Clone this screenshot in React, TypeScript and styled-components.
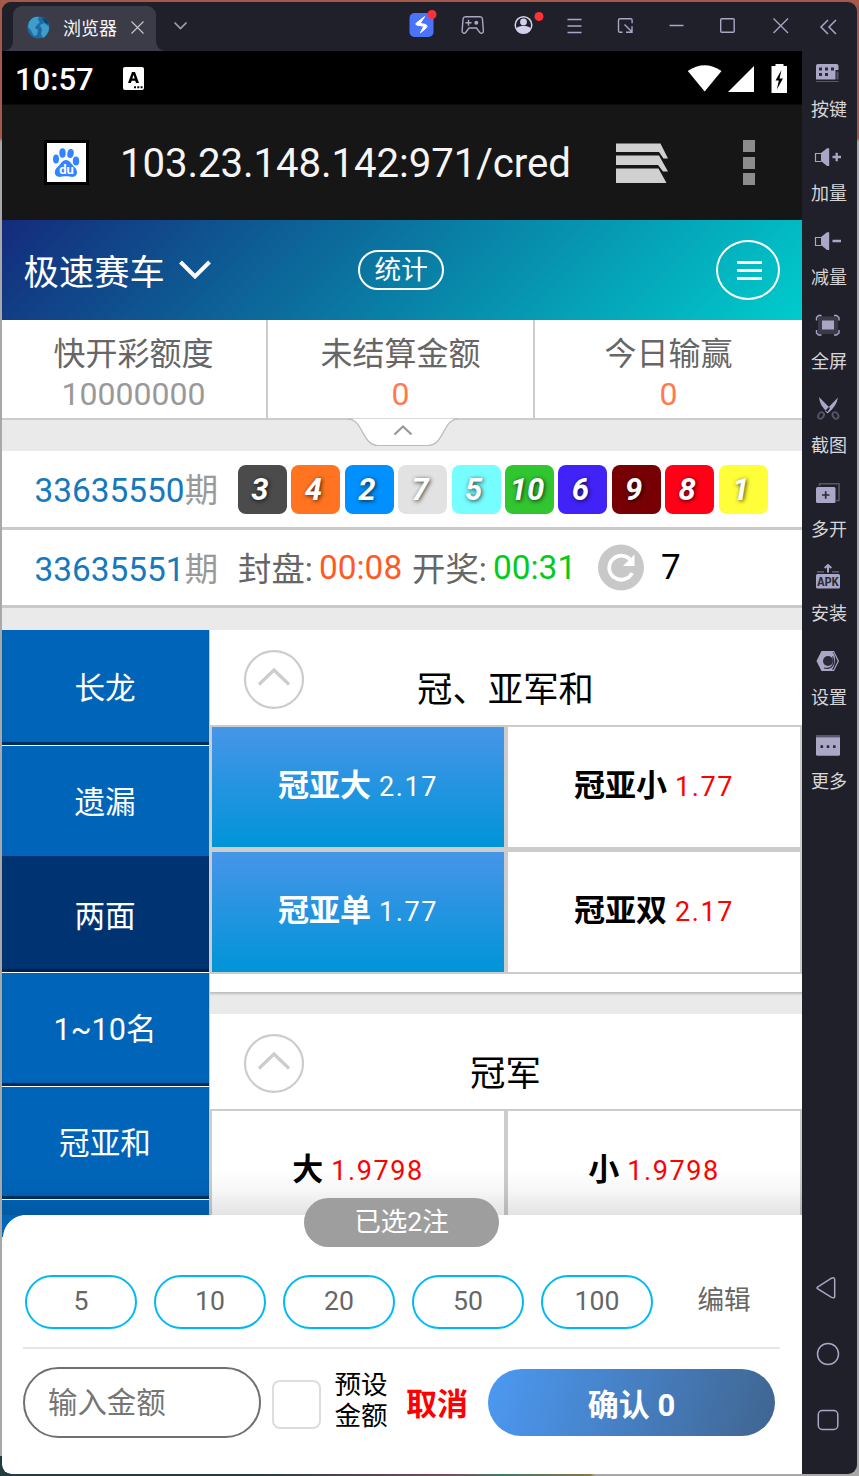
import React from 'react';
import styled, { createGlobalStyle, css } from 'styled-components';

const Global = createGlobalStyle`
  *, *::before, *::after { box-sizing: border-box; }
  body { margin: 0; }
  button, input { font: inherit; margin: 0; }
  svg { display: block; flex: none; }
`;

const lilac = '#a9a6c6';
const dim = '#56556a';

/* ---------- window frame ---------- */

const Desktop = styled.div`
  width: 859px;
  height: 1476px;
  padding: 2px;
  overflow: hidden;
  font-family: Roboto, 'Noto Sans CJK SC', sans-serif;
  background:
    linear-gradient(90deg, #233c42 0 250px, #7c4a5c 450px, #3d7b66 500px, #867843 590px, #a8a8a8 595px) 0 100% / 100% 20px no-repeat,
    linear-gradient(180deg, #a4594a 0 138px, #a8a8a8 142px);
`;

const Window = styled.div`
  display: flex;
  width: 855px;
  height: 1472px;
  border-radius: 9px;
  overflow: hidden;
  background: #20202b;
`;

const Phone = styled.div`
  width: 800px;
  flex: none;
  display: flex;
  flex-direction: column;
`;

const TitleBar = styled.div`
  height: 49px;
  flex: none;
  display: flex;
  background: #20202b;
`;

const AppTab = styled.div`
  position: relative;
  width: 143px;
  height: 45px;
  margin: 4px 1px 0 11px;
  padding: 0 12px 2px 14px;
  display: flex;
  align-items: center;
  background: #3c3c48;
  border-radius: 9px 9px 0 0;
  &::before, &::after {
    content: '';
    position: absolute;
    bottom: 0;
    width: 9px;
    height: 9px;
  }
  &::before { left: -9px; background: radial-gradient(circle at 0 0, transparent 8.5px, #3c3c48 9px); }
  &::after { right: -9px; background: radial-gradient(circle at 100% 0, transparent 8.5px, #3c3c48 9px); }
`;

const TabName = styled.span`
  flex: 1;
  margin-left: 13px;
  padding-bottom: 1px;
  font: 18px/26px 'Noto Sans CJK SC', sans-serif;
  color: #f4f4f6;
`;

const TabMenu = styled.div`
  margin-left: 10px;
  flex: 1;
`;

const WindowTools = styled.div`
  display: flex;
  width: 406.5px;
`;

/* ---------- right tool rail ---------- */

const Rail = styled.div`
  width: 55px;
  display: flex;
  flex-direction: column;
`;

const RailItem = styled.div`
  height: 84px;
  display: flex;
  flex-direction: column;
  align-items: center;
`;

const RailLabel = styled.span`
  font: 18px/30px 'Noto Sans CJK SC', sans-serif;
  color: #d6d6d8;
  margin-left: -1px;
`;

const RailNav = styled.div`
  margin-top: auto;
  padding-bottom: 21px;
`;

/* ---------- device bars ---------- */

const StatusBar = styled.div`
  height: 53px;
  flex: none;
  display: flex;
  align-items: center;
  padding: 2px 15px 0 13px;
  background: #000;
  color: #fff;
`;

const Clock = styled.span`
  width: 108px;
  padding-top: 2px;
  font-size: 31px;
  font-weight: 500;
  line-height: 36px;
`;

const Spacer = styled.span`
  flex: 1;
`;

const AddressBar = styled.div`
  height: 116px;
  flex: none;
  display: flex;
  align-items: center;
  padding: 0 47px 0 42px;
  background: #161616;
  border-top: 1px solid #0b0b0b;
`;

const SiteBadge = styled.span`
  width: 45px;
  height: 45px;
  border: 3px solid #000;
  background: #fff;
`;

const Address = styled.span`
  width: 450px;
  margin: 2px 46px 0 31px;
  white-space: nowrap;
  font-size: 40.2px;
  letter-spacing: -0.08px;
  line-height: 56px;
  color: #f5f5f5;
`;

const DotMenu = styled.span`
  display: grid;
  gap: 4.5px;
  margin-left: auto;
  i {
    width: 12px;
    height: 12px;
    background: #8c8c8c;
  }
`;

/* ---------- game header ---------- */

const GameHeader = styled.header`
  height: 100px;
  flex: none;
  display: flex;
  align-items: center;
  padding: 0 22px 0 21.6px;
  background: linear-gradient(135deg, #142b7c 0%, #00cccc 100%);
  color: #fff;
`;

const GameName = styled.span`
  font-size: 35.3px;
  line-height: 50px;
  margin: 6px 13.900px 0 0;
`;

const StatsPill = styled.button`
  width: 86px;
  height: 40px;
  margin-left: 147.500px;
  padding: 0;
  border: 2px solid #fff;
  border-radius: 20px;
  background: none;
  color: #fff;
  font-size: 26.6px;
  line-height: 36px;
`;

const RoundMenu = styled.button`
  width: 64px;
  height: 60px;
  margin-left: auto;
  padding: 0 0 0 3px;
  border: 2px solid #fff;
  border-radius: 50%;
  background: none;
  display: grid;
  place-content: center;
  gap: 5px;
  i {
    width: 25px;
    height: 3px;
    background: #fff;
  }
`;

const StatRow = styled.div`
  display: grid;
  grid-template-columns: 266px 267px 267px;
  height: 100px;
  flex: none;
  background: #fff;
  border-bottom: 2px solid #ccc;
`;

const Stat = styled.div<{ $last?: boolean }>`
  padding-top: 14px;
  border-right: ${(p) => (p.$last ? 'none' : '2px solid #ccc')};
  text-align: center;
  font-size: 32px;
  line-height: 40px;
  color: #666;
  &:first-child { padding-right: 1px; }
`;

const StatValue = styled.div<{ $tone: string }>`
  color: ${(p) => p.$tone};
`;

const Strip = styled.div<{ $h: number }>`
  height: ${(p) => p.$h}px;
  flex: none;
  background: #eaeaea;
`;

const FoldHandle = styled.div`
  width: 110px;
  margin: -2px 0 0 346px;
`;

/* ---------- draw rows ---------- */

const DrawRow = styled.div<{ $h: number; $b: number }>`
  height: ${(p) => p.$h}px;
  flex: none;
  display: flex;
  align-items: center;
  padding-left: 32.500px;
  background: #fff;
  border-bottom: ${(p) => p.$b}px solid #c9c9c9;
  font-size: 33.4px;
  line-height: 46px;
  color: #666;
`;

const Issue = styled.span`
  width: 203.500px;
  padding-top: 4px;
  color: #999;
  white-space: nowrap;
  b {
    font-weight: 400;
    color: #1678bd;
  }
`;

const Balls = styled.div`
  display: flex;
  gap: 4.4px;
`;

const Ball = styled.span<{ $bg: string }>`
  width: 49px;
  height: 49px;
  border-radius: 8px;
  background: ${(p) => p.$bg};
  color: #fff;
  font-size: 31px;
  font-weight: 700;
  font-style: italic;
  line-height: 50px;
  text-align: center;
  padding-right: 5px;
  text-shadow: 1px 1px 4px rgba(0, 0, 0, 0.75);
`;

const Countdown = styled.span<{ $tone: string; $w: number }>`
  width: ${(p) => p.$w}px;
  color: ${(p) => p.$tone};
`;

const CountLabel = styled.span<{ $w: number }>`
  width: ${(p) => p.$w}px;
  padding-top: 4px;
  white-space: nowrap;
`;

const RefreshCount = styled.span`
  margin-left: 17px;
  font-size: 35px;
  color: #000;
`;

/* ---------- bet area ---------- */

const Play = styled.div`
  display: flex;
  height: 585px;
  flex: none;
  overflow: hidden;
`;

const Menu = styled.nav`
  width: 207px;
  flex: none;
  display: flex;
  flex-direction: column;
  background: #0065b9;
`;

const MenuItem = styled.a<{ $h: number; $active?: boolean; $plain?: boolean; $lift: number }>`
  height: ${(p) => p.$h}px;
  flex: none;
  padding: 0 1px ${(p) => p.$lift}px 0;
  display: flex;
  align-items: center;
  justify-content: center;
  color: #fff;
  font-size: 30.6px;
  background: ${(p) => (p.$active ? '#003372' : '#0065b9')};
  ${(p) =>
    !p.$plain &&
    css`
      border-bottom: 1px solid #fff;
      box-shadow: inset 0 -3px 1px rgba(0, 25, 60, 0.75);
    `}
`;

const Board = styled.div`
  flex: 1;
  display: flex;
  flex-direction: column;
  background: #fff;
  border-left: 1px solid #bcd3e6;
`;

const GroupTitle = styled.div`
  height: 95px;
  flex: none;
  display: grid;
  grid-template-columns: 60px 1fr 95px;
  padding-left: 34px;
  font-size: 35.4px;
  line-height: 52px;
  color: #000;
  text-align: center;
  svg { margin-top: 20px; }
  span { margin-top: 34px; }
`;

const Cells = styled.div<{ $rows: number }>`
  height: ${(p) => p.$rows * 125 - 1}px;
  flex: none;
  display: grid;
  grid-template-columns: 292px 292px;
  grid-auto-rows: 120px;
  column-gap: 4px;
  row-gap: 5px;
  padding: 2px;
  background: #ccc;
`;

const Cell = styled.div<{ $on?: boolean }>`
  display: flex;
  align-items: center;
  justify-content: center;
  font-size: 27px;
  line-height: 40px;
  letter-spacing: 1.6px;
  padding-bottom: 1px;
  color: ${(p) => (p.$on ? '#fff' : '#f00')};
  background: ${(p) => (p.$on ? 'linear-gradient(180deg, #4795e8, #0094d8)' : '#fff')};
  strong {
    margin: -1px 8px 0 0;
    font-size: 31px;
    letter-spacing: 0;
    color: ${(p) => (p.$on ? '#fff' : '#000')};
  }
`;

const Gap = styled.div`
  height: 40px;
  flex: none;
  border-top: 18px solid #fff;
  background: linear-gradient(180deg, #b8b8b8, #e2e2e2 3px, #eaeaea 4px);
  background-clip: padding-box;
`;

/* ---------- bet slip ---------- */

const Slip = styled.div`
  position: relative;
  height: 259px;
  flex: none;
  padding: 60px 22px 0 21px;
  background: #fff;
  border-radius: 0 0 0 9px;
  &::before {
    content: '';
    position: absolute;
    left: 0;
    top: 0;
    width: 24px;
    height: 22px;
    background: radial-gradient(circle at 24px 23px, #fff 22.6px, #0065b9 23.4px);
  }
  &::after {
    content: '';
    position: absolute;
    inset: -46px 0 auto 0;
    height: 46px;
    background: linear-gradient(180deg, rgba(0, 0, 0, 0), rgba(0, 0, 0, 0.03) 45%, rgba(0, 0, 0, 0.11));
  }
`;

const CountBadge = styled.div`
  position: absolute;
  z-index: 1;
  left: 302px;
  top: -17px;
  width: 195px;
  height: 49px;
  border-radius: 25px;
  background: #9e9e9e;
  color: #fff;
  font-size: 26.6px;
  line-height: 48px;
  text-align: center;
`;

const ChipRow = styled.div`
  display: flex;
  align-items: flex-start;
  gap: 17px;
  height: 74px;
  padding-left: 2px;
  border-bottom: 2px solid #e6e6e6;
  color: #666;
  font-size: 26.6px;
`;

const Chip = styled.button`
  width: 112px;
  height: 54px;
  padding: 0 0 2px;
  border: 2px solid #00b9f2;
  border-radius: 27px;
  background: none;
  color: inherit;
  line-height: 48px;
`;

const EditLink = styled.span`
  margin-left: 27.500px;
  line-height: 50px;
`;

const PayRow = styled.div`
  display: flex;
  align-items: center;
  height: 107px;
`;

const Amount = styled.input`
  width: 238px;
  height: 71px;
  padding: 0 23px;
  border: 2px solid #707070;
  border-radius: 36px;
  background: #fff;
  font-size: 29.4px;
  outline: none;
  &::placeholder { color: #757575; opacity: 1; }
`;

const Check = styled.span`
  width: 49px;
  height: 49px;
  margin: 4px 13.500px 0 11px;
  border: 2px solid #ddd;
  border-radius: 8px;
`;

const Preset = styled.span`
  width: 54px;
  margin-top: -6px;
  font-size: 26.6px;
  line-height: 31px;
  color: #000;
`;

const Cancel = styled.span`
  margin: 5px 20px 0 17.500px;
  font-size: 31px;
  line-height: 44px;
  font-weight: 700;
  color: #f00;
  white-space: nowrap;
`;

const Confirm = styled.button`
  width: 287px;
  height: 67px;
  padding: 0;
  border: 0;
  border-radius: 34px;
  background: linear-gradient(105deg, #4c99f3, #406590);
  color: #fff;
  font-size: 31px;
  font-weight: 700;
`;

/* ---------- data ---------- */

const balls: [number, string][] = [
  [3, '#4b4b4b'], [4, '#ff7321'], [2, '#0090ff'], [7, '#e2e2e2'], [5, '#76fdff'],
  [10, '#31c52f'], [6, '#4123f8'], [9, '#760004'], [8, '#ff0016'], [1, '#fffe38'],
];

const menu = [
  { name: '长龙', h: 116, lift: 3 },
  { name: '遗漏', h: 110, plain: true, lift: 2 },
  { name: '两面', h: 117, active: true, lift: 0 },
  { name: '1~10名', h: 114, lift: 6 },
  { name: '冠亚和', h: 113, lift: 5 },
];

/* ---------- icons ---------- */

const tools: React.ReactNode[] = [
  <g>
    <rect x="13.5" y="11" width="24" height="24" rx="5" fill="#4b73fa" />
    <path d="M28.6 14.6l-8 6.2c-1.2 1-.8 2 .6 2.4l6.6 1-3.4 6.6 5.2-4.2c2-1.8 1.8-3.6-.4-4.2l-5-1z" fill="#fff" stroke="#fff" strokeWidth="1" />
    <circle cx="36" cy="12.5" r="4.5" fill="#fb3236" />
  </g>,
  <g fill="none" stroke={lilac} strokeWidth="1.4">
    <path d="M18.500 14.700h14.500c1.300 0 2.200.8 2.400 2l1 12.300c.1 2.300-2.300 3-3.600 1.500l-3.300-4.500h-7.500l-3.300 4.500c-1.300 1.500-3.700.8-3.600-1.500l1-12.300c.2-1.200 1.100-2 2.400-2z" />
    <path d="M18.500 20.800h6M21.500 17.800v6" />
    <circle cx="29.300" cy="20.800" r="2" fill={lilac} stroke="none" />
  </g>,
  <g>
    <circle cx="25.500" cy="23" r="8.300" fill="none" stroke="#d3d0ec" strokeWidth="1.500" />
    <circle cx="25.500" cy="20" r="3.400" fill="#d3d0ec" />
    <path d="M18 26.500c2-2 4.500-2.500 7.500-2.500s5.500.5 7.500 2.500c-1.500 3-4.500 4.700-7.500 4.700s-6-1.700-7.500-4.700z" fill="#d3d0ec" />
    <circle cx="41" cy="14.500" r="4.500" fill="#fb3236" />
  </g>,
  <path d="M18.500 17.500h14M18.500 24h14M18.500 30.500h14" stroke={lilac} strokeWidth="1.300" />,
  <path d="M22.500 30.300h-2.500c-1 0-1.500-.6-1.500-1.500v-10.600c0-1 .6-1.500 1.500-1.500h10.600c1 0 1.500.6 1.500 1.500v3M24.500 22.500l7.300 7.300M32 24.300v6h-6" fill="none" stroke={lilac} strokeWidth="1.400" />,
  <path d="M18.500 23.500h14" stroke={lilac} strokeWidth="1.300" />,
  <rect x="18.700" y="16.700" width="13.500" height="13.500" rx="1" fill="none" stroke={lilac} strokeWidth="1.400" />,
  <path d="M20.500 16.500l14.500 14.500M35 16.500l-14.500 14.500" stroke={lilac} strokeWidth="1.300" />,
];

const Speaker = ({ plus }: { plus?: boolean }) => (
  <g>
    <path d="M19.500 18.500h-6v8h6" fill="none" stroke={lilac} strokeWidth="1.200" />
    <path d="M19 18l6-4.800h2.200v17.800h-2.200l-6-5z" fill={lilac} />
    <path d={plus ? 'M30.500 22h8.500M34.700 17.800v8.500' : 'M30.500 22h8.500'} stroke={lilac} strokeWidth="2.300" />
  </g>
);

const railItems: [string, React.ReactNode][] = [
  ['按键', (
    <g>
      <path d="M16 13h18.500q2 0 2 2v4h-3v9.500h-19.500v-13.500q0-2 2-2z" fill={lilac} />
      <path d="M17 16.500h3v3h-3zM23 16.500h3v3h-3zM29 16.500h3v3h-3zM17 22h3v3h-3zM23 22h3v3h-3z" fill="#2b2b38" />
      <path d="M34.500 20.500h2v8h-2zM14 30h22.500v1h-22.500z" fill={dim} />
    </g>
  )],
  ['加量', <Speaker plus />],
  ['减量', <Speaker />],
  ['全屏', (
    <g>
      <rect x="16" y="13.500" width="20" height="17.500" fill="#3b3b48" />
      <rect x="20" y="17.500" width="12" height="9" fill={lilac} />
      <path d="M14.500 17.500v-3l2-2h3M32 12.500h2.500l2.500 2v3M14.500 27v3l2 2h3M32 32h2.500l2.500-2v-3" fill="none" stroke={lilac} strokeWidth="1.400" />
    </g>
  )],
  ['截图', (
    <g>
      <path d="M17 10l11 11-2.500 4q-8-6-8.500-15zM36 10.500l-13 13.500 2.500 2.500q9-7 10.500-16z" fill={lilac} />
      <g fill="none" stroke={dim} strokeWidth="1.800">
        <ellipse cx="19" cy="28.500" rx="2.600" ry="3.500" transform="rotate(35 19 28.500)" />
        <ellipse cx="33.500" cy="28.500" rx="2.600" ry="3.500" transform="rotate(-35 33.500 28.500)" />
      </g>
    </g>
  )],
  ['多开', (
    <g>
      <path d="M17.500 15v-2.300h19.500v16.800h-3" fill="none" stroke={dim} strokeWidth="1.600" />
      <rect x="14" y="16" width="19.500" height="16" rx="1.500" fill={lilac} />
      <path d="M20 24h7.500M23.700 20.200v7.500" stroke="#2b2b38" strokeWidth="1.700" />
    </g>
  )],
  ['安装', (
    <g>
      <path d="M15 16.800h7M30 16.800h7" stroke={dim} strokeWidth="1.800" />
      <path d="M26 17.500v-6M22.700 13l3.300-3 3.300 3" fill="none" stroke={lilac} strokeWidth="2" />
      <rect x="14" y="19" width="24" height="14.500" rx="1.500" fill={lilac} />
      <text x="26" y="30.500" textAnchor="middle" fontFamily="'Liberation Mono', monospace" fontWeight="700" fontSize="12" fill="#2b2b38">APK</text>
    </g>
  )],
  ['设置', (
    <g>
      <path d="M14.500 22l5-10h12.500l5 10-5 10h-12.500z" fill={lilac} />
      <path d="M30.500 13.300h1l4.200 8.700-4.200 8.700h-1.500q2.500-4 3-9t-2.500-8.400z" fill="#2b2b38" />
      <circle cx="26" cy="22" r="5" fill="#2b2b38" />
      <path d="M22 29q6 1.500 8.500-2.500t0-9" fill="none" stroke="#2b2b38" strokeWidth="1.200" />
    </g>
  )],
  ['更多', (
    <g>
      <path d="M14 12h24v2.200h-24z" fill={dim} />
      <path d="M14 14.200h24v17q0 1.500-1.500 1.500h-21q-1.500 0-1.500-1.500z" fill={lilac} />
      <path d="M18.500 22.300h2.600v2.600h-2.600zM24.700 22.300h2.600v2.600h-2.600zM31 22.300h2.600v2.600h-2.600z" fill="#2b2b38" />
    </g>
  )],
];

const navIcons: React.ReactNode[] = [
  <path d="M15.500 33.700q-1-.7 0-1.500l14-9q3.200-1.300 3.200 1.500v16.500q0 2.500-3.200 1.200z" />,
  <circle cx="26" cy="33" r="10.500" />,
  <rect x="16.300" y="23.500" width="19.500" height="19" rx="4" />,
];

const CircleUp = () => (
  <svg width="60" height="60" viewBox="0 0 60 60" fill="none" stroke="#ccc">
    <ellipse cx="30" cy="29.500" rx="29" ry="28.300" strokeWidth="2.200" />
    <path d="M15 34.500l15-14.500 15 14.500" strokeWidth="3.200" />
  </svg>
);

export default function App() {
  return (
    <Desktop>
      <Global />
      <Window>
        <Phone>
          <TitleBar>
            <AppTab>
              <svg width="23" height="23" viewBox="0 0 23 23">
                <circle cx="11.500" cy="11.500" r="11" fill="#1c6ba3" />
                <path d="M2 6q4-6 10-5l-1 3 2 2-4 4-1 2 3 2-1 5-3 1-4-7-2-2zM13 9l4-2 5 4q0 7-6 11l-2-4 1-4z" fill="#3f9dca" />
                <path d="M15 2q5 1 6.500 6l-3-1z" fill="#0c3e68" />
              </svg>
              <TabName>浏览器</TabName>
              <svg width="13" height="13" viewBox="0 0 13 13"><path d="M.5.500l12 12M12.500.500l-12 12" stroke="#c8c8cc" strokeWidth="1.100" /></svg>
            </AppTab>
            <TabMenu>
              <svg width="28" height="49" viewBox="0 0 28 49"><path d="M7.500 20.500l6 6 6-6" fill="none" stroke="#a0a0aa" strokeWidth="1.700" /></svg>
            </TabMenu>
            <WindowTools>
              {tools.map((icon, i) => (
                <svg key={i} width="51" height="49" viewBox="0 0 51 49">{icon}</svg>
              ))}
            </WindowTools>
          </TitleBar>

          <StatusBar>
            <Clock>10:57</Clock>
            <svg width="21" height="23" viewBox="0 0 21 23">
              <rect width="21" height="23" rx="2" fill="#fff" />
              <path d="M5 16L9 5h3l4 11h-3l-.8-2.300h-3.500l-.8 2.300zM9.300 11.500h2.400l-1.200-3.800z" fill="#000" fillRule="evenodd" />
              <path d="M11 19.200h2v2h-2zM14.300 19.200h2v2h-2zM17.600 19.200h2v2h-2z" fill="#000" />
            </svg>
            <Spacer />
            <svg width="100" height="30" viewBox="0 0 100 30" fill="#fff">
              <path d="M.8 7Q17.500-4.500 34.500 7L17.700 27.500z" />
              <path d="M67 2v26H41z" />
              <path d="M84.500 2h4v-2h8v2h3.500v27h-15.500z" />
              <path d="M94.500 6l-6 10.500h3.300l-2 9 6.200-11h-3.500z" fill="#000" />
            </svg>
          </StatusBar>

          <AddressBar>
            <SiteBadge>
              <svg width="39" height="39" viewBox="0 0 39 39" fill="#3385ff">
                <ellipse cx="9" cy="16" rx="3" ry="4.500" />
                <ellipse cx="15.500" cy="10" rx="3.200" ry="4.700" />
                <ellipse cx="23.500" cy="10.500" rx="3.200" ry="4.500" transform="rotate(10 23.500 10.500)" />
                <ellipse cx="29" cy="18" rx="3.200" ry="4.500" />
                <path d="M19 17c4 0 5.500 4.500 8.500 7s4 9-1 9.800c-2.500.4-4-.6-7.500-.6s-5 1-7.500.6c-5-.8-4.500-7-1-9.800s4.500-7 8.500-7z" />
                <text x="19.500" y="31" textAnchor="middle" fontFamily="Roboto, sans-serif" fontWeight="700" fontSize="13" fill="#fff">du</text>
              </svg>
            </SiteBadge>
            <Address>103.23.148.142:971/cred</Address>
            <svg width="54" height="42" viewBox="0 0 54 42" fill="#d0d0d0">
              <path d="M0 1.500h44.500l7.500 15h-4.500l-4.500-6.500H0zM0 13.500h43l9 16h-5l-5-6.500H0zM0 26.500h42.500l8 14.500H0z" />
            </svg>
            <DotMenu><i /><i /><i /></DotMenu>
          </AddressBar>

          <GameHeader>
            <GameName>极速赛车</GameName>
            <svg width="32" height="22" viewBox="0 0 32 22"><path d="M1.500 3L16 17.500 30.500 3" fill="none" stroke="#fff" strokeWidth="4" /></svg>
            <StatsPill>统计</StatsPill>
            <RoundMenu><i /><i /><i /></RoundMenu>
          </GameHeader>

          <StatRow>
            <Stat>快开彩额度<StatValue $tone="#999">10000000</StatValue></Stat>
            <Stat>未结算金额<StatValue $tone="#ff7b4d">0</StatValue></Stat>
            <Stat $last>今日输赢<StatValue $tone="#ff7b4d">0</StatValue></Stat>
          </StatRow>

          <Strip $h={31}>
            <FoldHandle>
              <svg width="110" height="30" viewBox="0 0 110 30" fill="none">
                <path d="M0 .8C15 1 14 27.500 30 27.500H80C96 27.500 95 1 110 .8" fill="#fff" stroke="#bbb" strokeWidth="1.200" />
                <path d="M46.500 16.500l8.500-8 8.500 8" stroke="#999" strokeWidth="2.200" />
              </svg>
            </FoldHandle>
          </Strip>

          <DrawRow $h={79} $b={3}>
            <Issue><b>33635550</b>期</Issue>
            <Balls>
              {balls.map(([n, bg]) => <Ball key={n} $bg={bg}>{n}</Ball>)}
            </Balls>
          </DrawRow>
          <DrawRow $h={78} $b={3}>
            <Issue><b>33635551</b>期</Issue>
            <CountLabel $w={81}>封盘:</CountLabel>
            <Countdown $tone="#ff5a26" $w={93}>00:08</Countdown>
            <CountLabel $w={81}>开奖:</CountLabel>
            <Countdown $tone="#00cc1d" $w={105}>00:31</Countdown>
            <svg width="46" height="47" viewBox="0 0 46 47">
              <circle cx="23" cy="23.500" r="23" fill="#c8c8c8" />
              <path d="M33.500 17.500A12 12 0 1 0 34 29" fill="none" stroke="#fff" strokeWidth="3.800" />
              <path d="M36.500 10.500V22H25z" fill="#fff" />
            </svg>
            <RefreshCount>7</RefreshCount>
          </DrawRow>
          <Strip $h={22} />

          <Play>
            <Menu>
              {menu.map((m) => (
                <MenuItem key={m.name} $h={m.h} $active={m.active} $plain={m.plain} $lift={m.lift}>{m.name}</MenuItem>
              ))}
            </Menu>
            <Board>
              <GroupTitle><CircleUp /><span>冠、亚军和</span></GroupTitle>
              <Cells $rows={2}>
                <Cell $on><strong>冠亚大</strong>2.17</Cell>
                <Cell><strong>冠亚小</strong>1.77</Cell>
                <Cell $on><strong>冠亚单</strong>1.77</Cell>
                <Cell><strong>冠亚双</strong>2.17</Cell>
              </Cells>
              <Gap />
              <GroupTitle><CircleUp /><span>冠军</span></GroupTitle>
              <Cells $rows={1}>
                <Cell><strong>大</strong>1.9798</Cell>
                <Cell><strong>小</strong>1.9798</Cell>
              </Cells>
            </Board>
          </Play>

          <Slip>
            <CountBadge>已选2注</CountBadge>
            <ChipRow>
              {[5, 10, 20, 50, 100].map((n) => <Chip key={n}>{n}</Chip>)}
              <EditLink>编辑</EditLink>
            </ChipRow>
            <PayRow>
              <Amount placeholder="输入金额" />
              <Check />
              <Preset>预设金额</Preset>
              <Cancel>取消</Cancel>
              <Confirm>确认 0</Confirm>
            </PayRow>
          </Slip>
        </Phone>

        <Rail>
          <svg width="55" height="49" viewBox="0 0 55 49">
            <path d="M26 18l-7 7 7 7M34 18l-7 7 7 7" fill="none" stroke={lilac} strokeWidth="1.500" />
          </svg>
          {railItems.map(([label, icon]) => (
            <RailItem key={label}>
              <svg width="55" height="42" viewBox="0 0 55 42">{icon}</svg>
              <RailLabel>{label}</RailLabel>
            </RailItem>
          ))}
          <RailNav>
            {navIcons.map((icon, i) => (
              <svg key={i} width="55" height="66" viewBox="0 0 55 66" fill="none" stroke={lilac} strokeWidth="1.500">{icon}</svg>
            ))}
          </RailNav>
        </Rail>
      </Window>
    </Desktop>
  );
}
